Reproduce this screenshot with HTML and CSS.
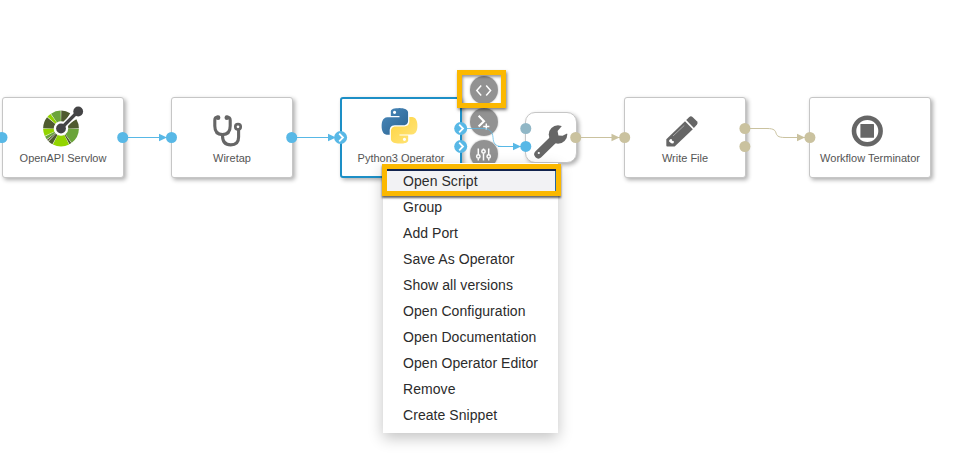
FILE: index.html
```html
<!DOCTYPE html>
<html lang="en">
<head>
<meta charset="utf-8">
<title>Workflow editor</title>
<link rel="stylesheet" href="styles.css">
</head>
<body>
<main class="canvas">
  <section class="node openapi">
    <svg class="icon" viewBox="41 105 44 44">
      <g class="wheel">
        <circle class="mid" cx="61" cy="128.5" r="12.6" pathLength="360" stroke-dasharray="52 308" stroke-dashoffset="-1"/>
        <circle class="dark" cx="61" cy="128.5" r="12.6" pathLength="360" stroke-dasharray="7 353" stroke-dashoffset="-54.5"/>
        <circle class="lime" cx="61" cy="128.5" r="12.6" pathLength="360" stroke-dasharray="54 306" stroke-dashoffset="-63"/>
        <circle class="dark" cx="61" cy="128.5" r="12.6" pathLength="360" stroke-dasharray="15 345" stroke-dashoffset="-119"/>
        <circle class="dark" cx="61" cy="128.5" r="12.6" pathLength="360" stroke-dasharray="5 355" stroke-dashoffset="-136"/>
        <circle class="mid" cx="61" cy="128.5" r="12.6" pathLength="360" stroke-dasharray="10 350" stroke-dashoffset="-143"/>
        <circle class="lime" cx="61" cy="128.5" r="12.6" pathLength="360" stroke-dasharray="24 336" stroke-dashoffset="-155"/>
        <circle class="dark" cx="61" cy="128.5" r="12.6" pathLength="360" stroke-dasharray="38 322" stroke-dashoffset="-181"/>
        <circle class="lime" cx="61" cy="128.5" r="12.6" pathLength="360" stroke-dasharray="13 347" stroke-dashoffset="-221"/>
        <circle class="mid" cx="61" cy="128.5" r="12.6" pathLength="360" stroke-dasharray="33 327" stroke-dashoffset="-236"/>
        <circle class="dark" cx="61" cy="128.5" r="12.6" pathLength="360" stroke-dasharray="30 330" stroke-dashoffset="-271"/>
        <circle class="dark" cx="61" cy="128.5" r="12.6" pathLength="360" stroke-dasharray="30 330" stroke-dashoffset="-329"/>
      </g>
      <path d="M61 128.5L78 111.5" stroke="#fff" stroke-width="6.2"/>
      <path d="M61 128.5L78 111.5" stroke="#444446" stroke-width="3.2"/>
      <circle cx="61" cy="128.5" r="4.9" fill="#444446"/>
      <circle cx="78.2" cy="111.5" r="4.9" fill="#444446"/>
    </svg>
    <span class="label">OpenAPI Servlow</span>
  </section>

  <section class="node wiretap">
    <svg class="icon" viewBox="210 105 44 44">
      <g fill="none" stroke="#666" stroke-width="3.1" stroke-linecap="round">
        <path d="M218 117.2C215.4 117 214.8 118 214.8 120.3V126C214.8 131.5 217.6 134.6 222.5 134.6S230.2 131.5 230.2 126V120.3C230.2 118 229.3 117 226.7 117.2"/>
        <path d="M222.5 135.5C222.5 141.5 225.3 144.9 230.7 144.9S238.6 142 238.6 137V130"/>
        <circle cx="238" cy="126.8" r="2.7" stroke-width="2.7"/>
      </g>
      <circle cx="218" cy="117.7" r="2.4" fill="#666"/>
      <circle cx="226.9" cy="117.7" r="2.4" fill="#666"/>
    </svg>
    <span class="label">Wiretap</span>
  </section>

  <section class="node python selected">
    <svg class="icon" viewBox="379 105 44 44">
      <defs>
        <linearGradient id="py-blue" x1="0" y1="0" x2="1" y2="1"><stop offset="0" stop-color="#4b8bbe"/><stop offset="1" stop-color="#2c628f"/></linearGradient>
        <linearGradient id="py-yellow" x1="0" y1="0" x2="1" y2="1"><stop offset="0" stop-color="#ffd33c"/><stop offset="1" stop-color="#ffe680"/></linearGradient>
      </defs>
      <g transform="translate(381.7 108.1) scale(1.48)">
        <path fill="url(#py-blue)" d="M14.25.18l.9.2.73.26.59.3.45.32.34.34.25.34.16.33.1.3.04.26.02.2-.01.13V8.5l-.05.63-.13.55-.21.46-.26.38-.3.31-.33.25-.35.19-.35.14-.33.1-.3.07-.26.04-.21.02H8.77l-.69.05-.59.14-.5.22-.41.27-.33.32-.27.35-.2.36-.15.37-.1.35-.07.32-.04.27-.02.21v3.06H3.17l-.21-.03-.28-.07-.32-.12-.35-.18-.36-.26-.36-.36-.35-.46-.32-.59-.28-.73-.21-.88-.14-1.05-.05-1.23.06-1.22.16-1.04.24-.87.32-.71.36-.57.4-.44.42-.33.42-.24.4-.16.36-.1.32-.05.24-.01h.16l.06.01h8.16v-.83H6.18l-.01-2.75-.02-.37.05-.34.11-.31.17-.28.25-.26.31-.23.38-.2.44-.18.51-.15.58-.12.64-.1.71-.06.77-.04.84-.02 1.27.05zm-6.3 1.98l-.23.33-.08.41.08.41.23.34.33.22.41.09.41-.09.33-.22.23-.34.08-.41-.08-.41-.23-.33-.33-.22-.41-.09-.41.09z"/>
        <path fill="url(#py-yellow)" d="M21.1 6.11l.28.06.32.12.35.18.36.27.36.35.35.47.32.59.28.73.21.88.14 1.04.05 1.23-.06 1.23-.16 1.04-.24.86-.32.71-.36.57-.4.45-.42.33-.42.24-.4.16-.36.09-.32.05-.24.02-.16-.01h-8.22v.82h5.84l.01 2.76.02.36-.05.34-.11.31-.17.29-.25.25-.31.24-.38.2-.44.17-.51.15-.58.13-.64.09-.71.07-.77.04-.84.01-1.27-.04-1.07-.14-.9-.2-.73-.25-.59-.3-.45-.33-.34-.34-.25-.34-.16-.33-.1-.3-.04-.25-.02-.2.01-.13v-5.34l.05-.64.13-.54.21-.46.26-.38.3-.32.33-.24.35-.2.35-.14.33-.1.3-.06.26-.04.21-.02.13-.01h5.84l.69-.05.59-.14.5-.21.41-.28.33-.32.27-.35.2-.36.15-.36.1-.35.07-.32.04-.28.02-.21V6.07h2.09l.14.01zm-6.47 14.25l-.23.33-.08.41.08.41.23.33.33.23.41.08.41-.08.33-.23.23-.33.08-.41-.08-.41-.23-.33-.33-.23-.41-.08-.41.08z"/>
      </g>
    </svg>
    <span class="label">Python3 Operator</span>
  </section>

  <section class="node tool">
    <svg class="tool-icon" viewBox="525 112 51 51">
      <path d="M537.4 154.3L552.5 139.5" stroke="#666" stroke-width="8.2" stroke-linecap="round"/>
      <circle cx="557" cy="134.5" r="9.3" fill="#666"/>
      <path d="M557.4 135.6L556.6 131L563 123.5L570 131.5L561.6 135.7Z" fill="#fff"/>
      <circle cx="537.8" cy="153" r="1.1" fill="#fff"/>
    </svg>
  </section>

  <section class="node write">
    <svg class="icon" viewBox="663 105 44 44">
      <g fill="#666">
        <path d="M666.3 139.3L685 121.2L692.8 129.2L674.7 146.6H667.3Q666.3 146.6 666.3 145.5Z"/>
        <path d="M686.2 120L689.3 117Q690.9 115.6 692.5 117L696.9 121.3Q698.4 122.9 697 124.6L693.9 128Z"/>
      </g>
      <path d="M673 136L684.3 125.4" stroke="#c4c4c4" stroke-width=".7"/>
      <path d="M669.2 140.2C670.7 138.6 672.1 138.8 672 140.7C674.3 140.6 674.6 142.1 673.1 143.4L671.2 143.3L669.1 141.5Z" fill="#fff"/>
    </svg>
    <span class="label">Write File</span>
  </section>

  <section class="node terminator">
    <svg class="icon" viewBox="848 105 44 44">
      <circle cx="867.3" cy="131" r="13.3" fill="none" stroke="#666" stroke-width="4.6"/>
      <rect x="860.4" y="124" width="13.6" height="13.8" rx=".6" fill="#666"/>
    </svg>
    <span class="label">Workflow Terminator</span>
  </section>

  <div class="actions">
    <svg class="action" viewBox="0 0 28 28"><path d="M11.2 9.5L6.8 14.5L11.2 19.5M16.2 9.5L20.6 14.5L16.2 19.5"/></svg>
    <svg class="action" viewBox="0 0 28 28"><path class="prompt" d="M8.6 7.8L14 13.2L8.6 18.6"/><path d="M16.3 15.4V21.4M13.2 18.4H19.4"/></svg>
    <svg class="action" viewBox="0 0 28 28"><path d="M8.3 8.5V14.5M8.3 18.3V20.5M13.5 8.5V9.5M13.5 13.2V20.5M18.7 8.5V14.5M18.7 18.3V20.5"/><circle cx="8.3" cy="16.4" r="1.7"/><circle cx="13.5" cy="11.4" r="1.7"/><circle cx="18.7" cy="16.4" r="1.7"/></svg>
  </div>

  <svg class="wires" viewBox="0 0 963 460">
    <g class="active">
      <path d="M123 137.5H171M292 137.5H340M498 146.5H526"/>
      <path class="port-link" d="M461 128.5H483C490 128.5 492.6 132 493 137.5C493.4 143 495 146.5 502 146.5"/>
      <path class="head" d="M159 133.7L167 137.5L159 141.3ZM328 133.7L336 137.5L328 141.3ZM513 142.7L521 146.5L513 150.3Z"/>
      <circle cx="2" cy="137.5" r="5.5"/><circle cx="122.7" cy="137.5" r="5.5"/>
      <circle cx="171.5" cy="137.5" r="5.5"/><circle cx="291.7" cy="137.5" r="5.5"/>
      <circle cx="340.6" cy="137.5" r="6.5"/><circle cx="460.7" cy="128.5" r="6.5"/><circle cx="460.7" cy="146.5" r="6.5"/>
      <circle cx="525.8" cy="146.4" r="5.5"/>
      <path class="chevron" d="M339.2 133.7L343 137.5L339.2 141.3M459.2 124.7L463 128.5L459.2 132.3M459.2 142.7L463 146.5L459.2 150.3"/>
    </g>
    <circle cx="525.8" cy="128.5" r="5.5" fill="#91b7c6"/>
    <g class="idle">
      <path d="M576 137.5H625M745 128.5H767C782 128.5 770 137.5 785 137.5H810"/>
      <path class="head" d="M611.5 133.7L619.5 137.5L611.5 141.3ZM797 133.7L805 137.5L797 141.3Z"/>
      <circle cx="575.7" cy="137.5" r="5.5"/><circle cx="624.7" cy="137.5" r="5.5"/>
      <circle cx="744.9" cy="128.5" r="5.5"/><circle cx="744.9" cy="146.5" r="5.5"/><circle cx="809.9" cy="137.5" r="5.5"/>
    </g>
  </svg>

  <ul class="menu">
    <li class="current">Open Script</li>
    <li>Group</li>
    <li>Add Port</li>
    <li>Save As Operator</li>
    <li>Show all versions</li>
    <li>Open Configuration</li>
    <li>Open Documentation</li>
    <li>Open Operator Editor</li>
    <li>Remove</li>
    <li>Create Snippet</li>
  </ul>

  <div class="callout callout-action"></div>
  <div class="callout callout-menu"></div>
</main>
</body>
</html>
```
FILE: styles.css
```css
* { box-sizing: border-box; }
body {
  margin: 0;
  background: #fff;
  font-family: "Liberation Sans", Arial, sans-serif;
  overflow: hidden;
}
.canvas { position: relative; width: 963px; height: 460px; overflow: hidden; }
.node {
  position: absolute;
  top: 97px;
  width: 122px;
  height: 81px;
  display: flex;
  flex-direction: column;
  align-items: center;
  padding-top: 7px;
  background: #fff;
  border: 1px solid #c6c6c6;
  border-radius: 3px;
  box-shadow: 2px 2px 4px rgba(0, 0, 0, .32);
}
.openapi { left: 2px; }
.wiretap { left: 171px; }
.python { left: 340px; }
.write { left: 624px; }
.terminator { left: 809px; }
.selected { border: 2px solid #1d8fc6; padding-top: 6px; }
.tool { left: 525px; top: 112px; width: 52px; height: 51px; padding: 0; border-radius: 10px; }
.icon { flex: none; width: 44px; height: 44px; }
.tool-icon { flex: none; width: 51px; height: 51px; margin: -1px; }
.label {
  margin-top: 2px;
  font-size: 11px;
  line-height: 14px;
  color: #555;
  white-space: nowrap;
}
.wheel circle { fill: none; stroke-width: 10.6; }
.wheel .dark { stroke: #4f5b2f; }
.wheel .mid { stroke: #6ba43a; }
.wheel .lime { stroke: #92d400; }

.wires { position: absolute; inset: 0; width: 963px; height: 460px; }
.wires path { fill: none; stroke-width: 1; }
.active path { stroke: #58b8e6; }
.active circle, .active .head { fill: #58b8e6; }
.idle path { stroke: #cac29f; }
.idle circle, .idle .head { fill: #cac29f; }
.wires .head { stroke: none; }
.wires .chevron { stroke: #fff; stroke-width: 1.8; }
.wires .port-link { stroke-opacity: .75; }

.actions {
  position: absolute;
  left: 470px;
  top: 76px;
  display: flex;
  flex-direction: column;
  gap: 4px;
}
.action {
  width: 28px;
  height: 28px;
  border-radius: 50%;
  background: rgba(140, 140, 140, .95);
  box-shadow: 0 0 2px rgba(0, 0, 0, .3);
  fill: none;
  stroke: #fff;
  stroke-width: 1.5;
}
.action .prompt { stroke-width: 2.1; }

.menu {
  position: absolute;
  left: 383px;
  top: 163px;
  width: 175px;
  height: 270px;
  margin: 0;
  padding: 5px 0;
  list-style: none;
  background: #fff;
  box-shadow: 0 5px 14px rgba(0, 0, 0, .24);
  font-size: 14px;
  line-height: 26px;
  letter-spacing: .06px;
  color: #2b2b2b;
}
.menu li { height: 26px; padding-left: 20px; white-space: nowrap; }
.menu .current { background: #f2f2f4; }

.callout { position: absolute; border: 5px solid #fbb800; }
.callout-action {
  left: 457px;
  top: 70px;
  width: 49px;
  height: 38px;
  box-shadow: 1px 2px 3px rgba(0, 0, 0, .5), inset 1px 2px 3px rgba(0, 0, 0, .4);
}
.callout-menu {
  left: 382px;
  top: 164px;
  width: 179px;
  height: 32px;
  box-shadow: 0 2px 2px rgba(0, 0, 0, .6), inset 0 2px 0 #12234e, inset -1px 0 0 #2566a4;
}
```
